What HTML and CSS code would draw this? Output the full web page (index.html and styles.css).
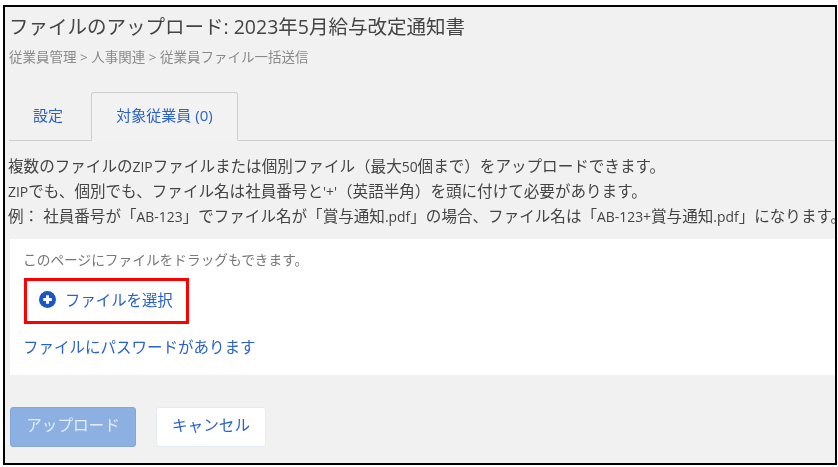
FILE: index.html
```html
<!DOCTYPE html>
<html lang="ja">
<head>
<meta charset="utf-8">
<title>ファイルのアップロード</title>
<link rel="stylesheet" href="styles.css">
</head>
<body>
<div class="frame">
  <header class="head">
    <h1 class="title">ファイルのアップロード: 2023年5月給与改定通知書</h1>
    <div class="crumbs">従業員管理 &gt; 人事関連 &gt; 従業員ファイル一括送信</div>
  </header>
  <nav class="tabs">
    <a class="tab">設定</a>
    <a class="tab active">対象従業員 (0)</a>
  </nav>
  <div class="notes">
    <p>複数のファイルの<span class="lat">ZIP</span>ファイルまたは個別ファイル（最大<span class="lat">50</span>個まで）をアップロードできます。</p>
    <p><span class="lat">ZIP</span>でも、個別でも、ファイル名は社員番号と<span class="lat">'+'</span>（英語半角）を頭に付けて必要があります。</p>
    <p>例： 社員番号が「<span class="lat">AB-123</span>」でファイル名が「賞与通知<span class="lat">.pdf</span>」の場合、ファイル名は「<span class="lat">AB-123+</span>賞与通知<span class="lat">.pdf</span>」になります。</p>
  </div>
  <section class="panel">
    <div class="hint">このページにファイルをドラッグもできます。</div>
    <div class="pick">
      <svg class="plus" viewBox="0 0 16 16" width="17" height="17"><circle cx="8" cy="8" r="8" fill="#1a56c4"/><path d="M8 4v8M4 8h8" stroke="#fff" stroke-width="2.8"/></svg>
      <span>ファイルを選択</span>
    </div>
    <a class="pw">ファイルにパスワードがあります</a>
  </section>
  <div class="actions">
    <button class="btn primary">アップロード</button>
    <button class="btn">キャンセル</button>
  </div>
</div>
</body>
</html>
```
FILE: styles.css
```css
* { box-sizing: border-box; }
html, body { margin: 0; padding: 0; background: #fff; }
body { font-family: "Open Sans", "Noto Sans CJK JP", sans-serif; width: 838px; height: 467px; overflow: hidden; padding: 5px 1px 2px 3px; }
.frame { width: 834px; height: 460px; border: 2px solid #000; background: #f1f1f1; overflow: hidden; filter: blur(0.3px); }
.head { padding: 6px 0 0 4px; }
.title { margin: 0; font-size: 19.5px; font-weight: 400; line-height: 28px; color: #444; white-space: nowrap; }
.crumbs { margin-top: 6px; font-size: 13.5px; line-height: 20px; color: #8a8a8a; }
.tabs { display: flex; margin: 25px 0 0 4px; border-bottom: 1px solid #cfcfcf; height: 49px; }
.tab { display: flex; align-items: center; justify-content: center; font-size: 15px; color: #2a62c9; height: 49px; width: 82px; padding: 0 4px 5px 0; }
.tab.active { width: 147px; padding: 0 0 5px; background: #f2f2f2; border: 1px solid #cfcfcf; border-bottom: 1px solid #f2f2f2; border-radius: 3px 3px 0 0; }
.notes { margin-top: 13px; padding-left: 3px; font-size: 15.57px; color: #444; white-space: nowrap; height: 85px; overflow: hidden; }
.notes p { margin: 0; line-height: 25px; }
.lat { font-size: 13.9px; }
.panel { margin-left: 5px; height: 136px; background: #fff; padding: 11px 0 0 13px; display: flex; flex-direction: column; align-items: flex-start; }
.hint { font-size: 13.7px; line-height: 20px; color: #777; }
.pick { margin: 8px 0 0 1px; width: 165px; height: 46px; border: 3px solid #f00; display: flex; align-items: center; padding: 0 0 3px 12px; gap: 9px; font-size: 15.4px; color: #2a62c9; }
.plus { flex: none; }
.pw { margin-top: 11px; font-size: 15.5px; line-height: 24px; color: #2a62c9; }
.actions { display: flex; gap: 20px; padding: 32px 0 0 5px; }
.btn { font: inherit; font-size: 15.6px; height: 40px; border-radius: 3px; border: 1px solid #e6ecf7; background: #fff; color: #2a62c9; width: 110px; padding: 0 0 5px; }
.btn.primary { width: 126px; background: #8db0e3; border-color: #82a6dc; color: #e4ecf8; }
```
